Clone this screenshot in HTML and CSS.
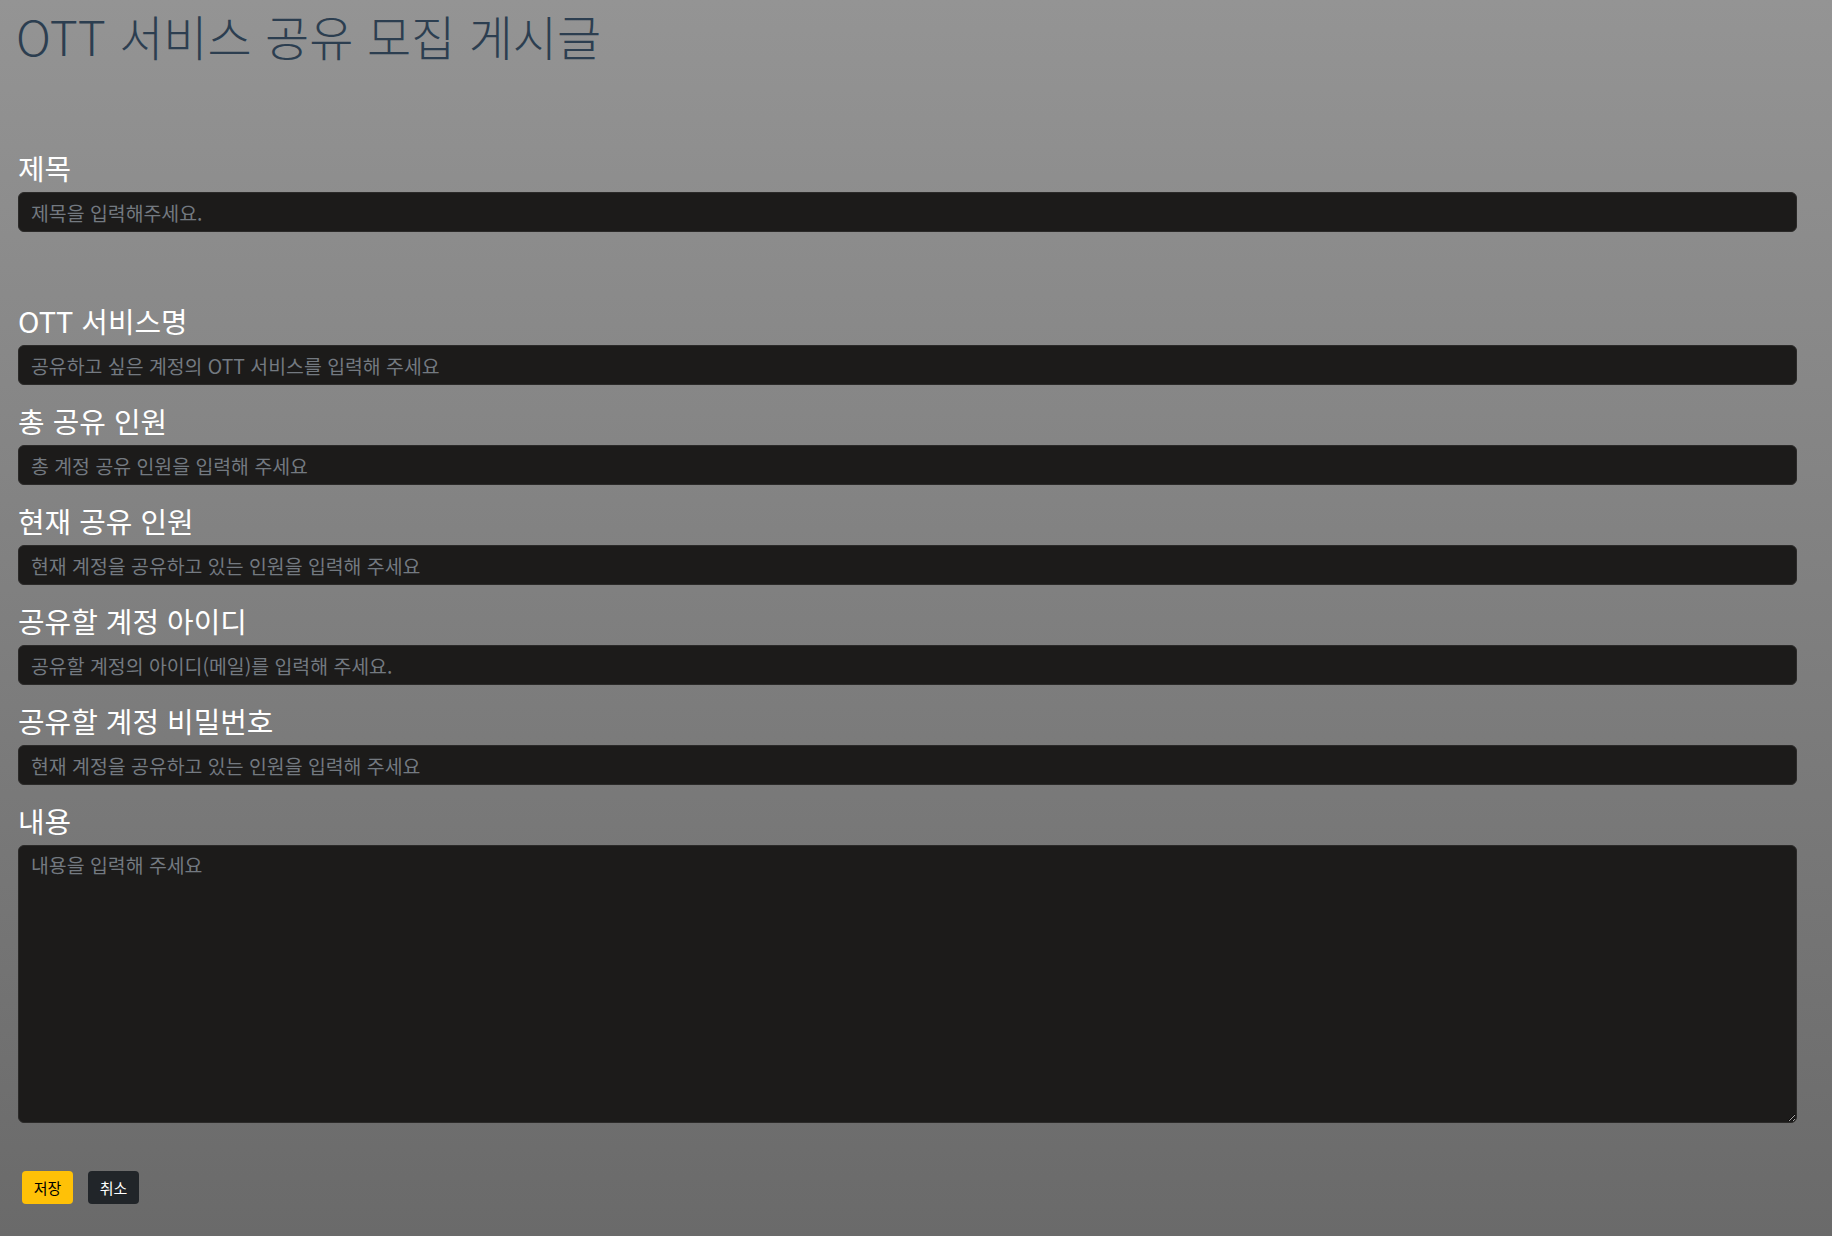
FILE: index.html
```html
<!DOCTYPE html>
<html lang="ko">
<head>
<meta charset="utf-8">
<title>OTT 서비스 공유 모집 게시글</title>
<link rel="stylesheet" href="styles.css">
</head>
<body>
<div class="page">
  <h1 class="title">OTT 서비스 공유 모집 게시글</h1>
  <form class="form">
    <div class="group group-first">
      <label class="label">제목</label>
      <input class="field" type="text" placeholder="제목을 입력해주세요.">
    </div>
    <div class="group">
      <label class="label">OTT 서비스명</label>
      <input class="field" type="text" placeholder="공유하고 싶은 계정의 OTT 서비스를 입력해 주세요">
    </div>
    <div class="group">
      <label class="label">총 공유 인원</label>
      <input class="field" type="text" placeholder="총 계정 공유 인원을 입력해 주세요">
    </div>
    <div class="group">
      <label class="label">현재 공유 인원</label>
      <input class="field" type="text" placeholder="현재 계정을 공유하고 있는 인원을 입력해 주세요">
    </div>
    <div class="group">
      <label class="label">공유할 계정 아이디</label>
      <input class="field" type="text" placeholder="공유할 계정의 아이디(메일)를 입력해 주세요.">
    </div>
    <div class="group">
      <label class="label">공유할 계정 비밀번호</label>
      <input class="field" type="text" placeholder="현재 계정을 공유하고 있는 인원을 입력해 주세요">
    </div>
    <div class="group">
      <label class="label">내용</label>
      <textarea class="field area" placeholder="내용을 입력해 주세요"></textarea>
    </div>
    <div class="actions">
      <button type="button" class="btn btn-save">저장</button>
      <button type="button" class="btn btn-cancel">취소</button>
    </div>
  </form>
</div>
</body>
</html>
```
FILE: styles.css
```css
html, body {
  margin: 0;
  padding: 0;
  height: 100%;
}
body {
  background: linear-gradient(to bottom, #949494 0%, #6a6a6a 100%);
  font-family: "Noto Sans CJK KR", "Noto Sans", sans-serif;
  overflow: hidden;
}
.page {
  padding: 0 35px 0 18px;
}
.title {
  margin: 0;
  padding-top: 11px;
  margin-left: -2px;
  font-size: 48px;
  line-height: 48px;
  font-weight: 300;
  color: #2c3e50;
}
.form {
  display: flex;
  flex-direction: column;
  margin-top: 92px;
}
.group {
  display: flex;
  flex-direction: column;
  margin-bottom: 19px;
}
.group-first {
  margin-bottom: 72px;
}
.label {
  color: #ffffff;
  font-size: 28.9px;
  line-height: 32px;
  margin-bottom: 9px;
}
.field {
  box-sizing: border-box;
  width: 100%;
  height: 40px;
  padding: 5px 12px;
  font-family: "Noto Sans CJK KR", "Noto Sans", sans-serif;
  font-size: 19.4px;
  line-height: 28px;
  color: #dddddd;
  background: #1c1b1a;
  border: 1px solid #2b2a29;
  border-radius: 6px;
  outline: none;
}
.field::placeholder {
  color: #737980;
}
.area {
  height: 278px;
  resize: vertical;
  display: block;
}
.actions {
  display: flex;
  gap: 15px;
  margin-top: 29px;
  padding-left: 4px;
}
.btn {
  box-sizing: border-box;
  width: 51px;
  height: 33px;
  padding: 0;
  border: none;
  border-radius: 4px;
  font-family: "Noto Sans CJK KR", "Noto Sans", sans-serif;
  font-size: 15px;
  line-height: 33px;
  cursor: pointer;
}
.btn-save {
  background: #ffc107;
  color: #000000;
}
.btn-cancel {
  background: #212529;
  color: #ffffff;
}
```
